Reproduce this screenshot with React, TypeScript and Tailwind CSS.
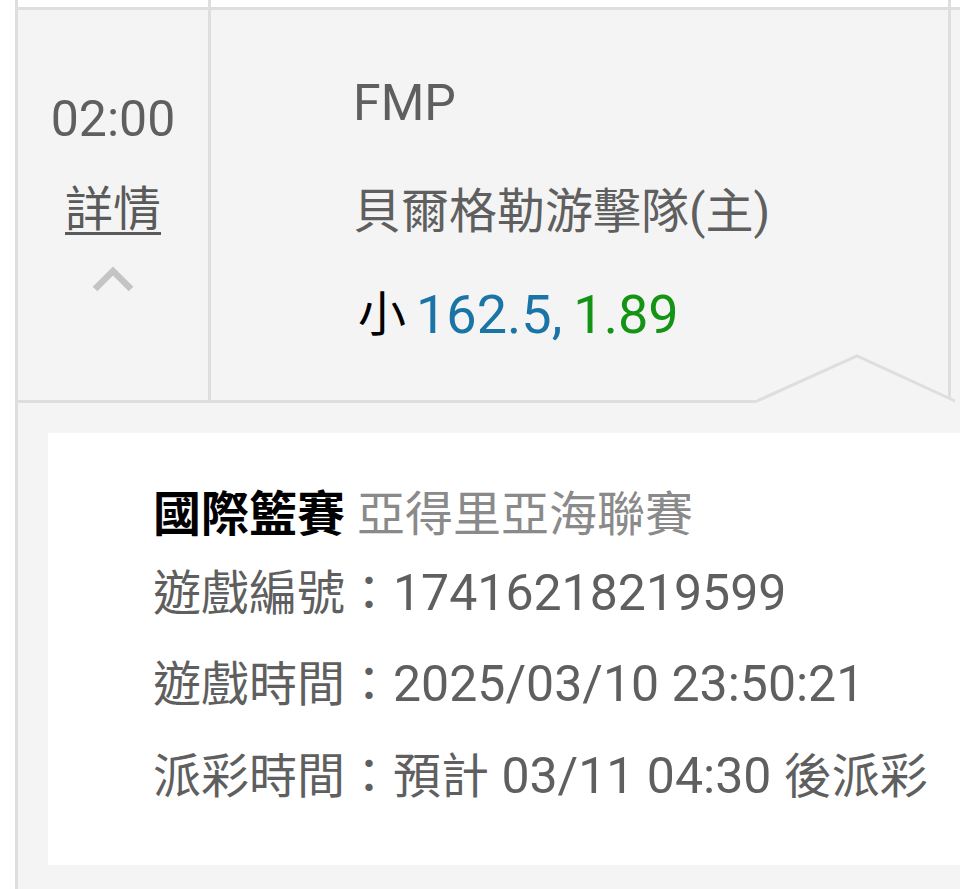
const font = { fontFamily: 'Roboto, "Noto Sans CJK TC", sans-serif' };

// 拉丁字元 (數字) 在截圖中比中文略大
function Num({ children, className = '' }: { children: React.ReactNode; className?: string }) {
  return <span className={`text-[50px] leading-[48px] ${className}`}>{children}</span>;
}

export default function App() {
  return (
    <div className="w-[960px] h-[889px] overflow-hidden bg-white pl-[15px] text-[#5f5f5f]" style={font}>
      <div className="border-l-[3px] border-[#dedede] h-full flex flex-col">
        {/* 上一列的尾巴 */}
        <div className="flex h-[10px] border-b-[3px] border-[#dedede]">
          <div className="w-[193px] border-r-[3px] border-[#dedede] bg-white" />
          <div className="w-[740px] border-r-[3px] border-[#dedede] bg-white" />
          <div className="flex-1 bg-white" />
        </div>

        {/* 賽事列 */}
        <div className="relative flex h-[390px] bg-[#f4f4f4]">
          <div className="w-[193px] border-r-[3px] border-[#dedede] flex flex-col items-center pt-[85px]">
            <div className="text-[50px] leading-[48px]">02:00</div>
            <div className="mt-[43px] text-[48px] leading-[48px] text-[#5a5a5a] underline decoration-[3px] underline-offset-[6px]">詳情</div>
            <svg className="mt-[31px]" width="44" height="28" viewBox="0 0 44 28">
              <polyline points="4,24 22,6 40,24" fill="none" stroke="#c4c4c4" strokeWidth="6.5" />
            </svg>
          </div>
          <div className="w-[740px] border-r-[3px] border-[#dedede] pl-[142px] pt-[69px] flex flex-col">
            <div className="text-[50px] leading-[48px]">FMP</div>
            <div className="mt-[61px] text-[48px] leading-[48px]">貝爾格勒游擊隊(主)</div>
            <div className="mt-[55px] text-[48px] leading-[48px] flex items-center gap-[10px]">
              <span className="text-black pl-[5px]">小</span>
              <span className="text-[54px] leading-[48px]">
                <span className="text-[#1b74a6]">162.5,</span>
                <span className="text-[#159315]">&thinsp;1.89</span>
              </span>
            </div>
          </div>
          <div className="flex-1" />
          <svg className="absolute left-[739px] bottom-[-3px]" width="204" height="50" viewBox="0 0 204 50">
            <polygon points="0,47 100,2 196,47 204,47 204,50 0,50" fill="#f4f4f4" />
            <polyline points="0,48 100,3 198,48" fill="none" stroke="#dedede" strokeWidth="3" />
          </svg>
        </div>
        <div className="h-[3px] bg-[#dedede] w-[739px]" />

        {/* 詳情面板 */}
        <div className="flex-1 bg-[#f4f4f4] pl-[30px] pt-[30px]">
          <div className="bg-white h-[432px] pl-[105px] pt-[58px] flex flex-col text-[48px] leading-[48px]">
            <div>
              <span className="font-bold text-black">國際籃賽</span>
              <span className="text-[#8a8a8a]"> 亞得里亞海聯賽</span>
            </div>
            <div className="mt-[30px]">遊戲編號：<Num>17416218219599</Num></div>
            <div className="mt-[42px]">遊戲時間：<Num>2025/03/10 23:50:21</Num></div>
            <div className="mt-[43px]">派彩時間：預計<Num> 03/11 04:30 </Num>後派彩</div>
          </div>
        </div>
      </div>
    </div>
  );
}
